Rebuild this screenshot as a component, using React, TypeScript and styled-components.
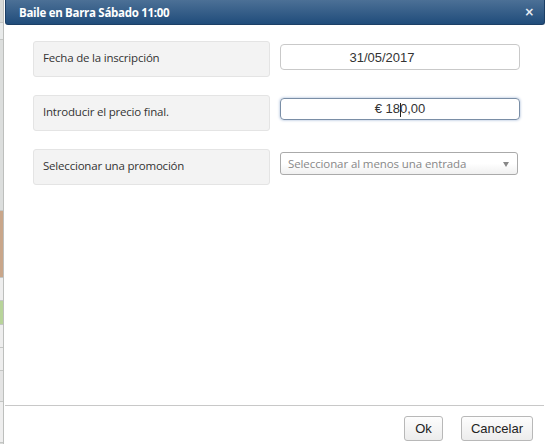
import React from "react";
import styled, { createGlobalStyle } from "styled-components";

const Global = createGlobalStyle`
  html, body {
    margin: 0;
    padding: 0;
    background: #fff;
    overflow: hidden;
  }
`;

const Page = styled.div`
  display: flex;
  width: 548px;
  height: 444px;
`;

const Strip = styled.div`
  width: 3px;
  display: flex;
  flex-direction: column;
  background: #d9dbd9;
`;

const StripPart = styled.div<{ $h: number; $c: string }>`
  height: ${(p) => p.$h}px;
  background: ${(p) => p.$c};
  border-bottom: 1px solid #c4c6c4;
`;

const Dialog = styled.div`
  flex: 1;
  display: flex;
  flex-direction: column;
  border-left: 1px solid #bdbfbd;
  background: #fff;
`;

const Header = styled.div`
  height: 25px;
  margin: 0 3px 0 1px;
  padding: 0 10px 0 13px;
  display: flex;
  align-items: center;
  justify-content: space-between;
  background: linear-gradient(#4c7096, #204c7b);
  border: 1px solid #1c3f66;
  border-top: none;
  border-radius: 0 0 3px 3px;
  box-sizing: border-box;
  color: #fff;
  font-family: "Open Sans", "DejaVu Sans", sans-serif;
  font-weight: 700;
  font-size: 11.5px;
  letter-spacing: -0.3px;
`;

const Close = styled.span`
  font-family: "DejaVu Sans", sans-serif;
  font-size: 12px;
  font-weight: 700;
  line-height: 1;
  color: #e8edf3;
`;

const Body = styled.div`
  flex: 1;
  display: flex;
  flex-direction: column;
  gap: 18px;
  padding: 16px 0 0 29px;
`;

const Row = styled.div`
  display: flex;
  align-items: flex-start;
`;

const Label = styled.div`
  width: 237px;
  height: 36px;
  box-sizing: border-box;
  padding: 0 9px 3px;
  display: flex;
  align-items: center;
  background: #f3f3f3;
  border: 1px solid #e4e4e4;
  border-radius: 3px;
  font-family: "Open Sans", "DejaVu Sans", sans-serif;
  font-size: 11.5px;
  color: #333;
  letter-spacing: -0.2px;
`;

const Field = styled.div<{ $focus?: boolean; $shift?: number }>`
  margin: 3px 0 0 10px;
  width: 240px;
  height: ${(p) => (p.$focus ? 22 : 26)}px;
  box-sizing: border-box;
  padding-right: ${(p) => p.$shift ?? 0}px;
  display: flex;
  align-items: center;
  justify-content: center;
  border: 1px solid ${(p) => (p.$focus ? "#7a8ea6" : "#c9c9c9")};
  border-radius: 4px;
  box-shadow: ${(p) => (p.$focus ? "0 0 3px #9db4d3" : "none")};
  font-family: "Liberation Sans", Arial, sans-serif;
  font-size: 13px;
  color: #333;
`;

const Caret = styled.span`
  display: inline-block;
  width: 1px;
  height: 14px;
  background: #222;
  vertical-align: middle;
  margin: 0 -1px 0 0;
`;

const Select = styled.div`
  margin: 3px 0 0 10px;
  width: 238px;
  height: 23px;
  box-sizing: border-box;
  padding: 0 8px 0 7px;
  display: flex;
  align-items: center;
  justify-content: space-between;
  border: 1px solid #aaa;
  border-radius: 3px;
  background: linear-gradient(#fff 50%, #f0f0f0);
  font-family: "Open Sans", "DejaVu Sans", sans-serif;
  font-size: 11.5px;
  color: #888;
  letter-spacing: -0.1px;
`;

const Arrow = styled.span`
  width: 0;
  height: 0;
  border-left: 3px solid transparent;
  border-right: 3px solid transparent;
  border-top: 5px solid #888;
  margin-top: 2px;
`;

const Footer = styled.div`
  margin: 0 4px 0 1px;
  border-top: 1px solid #c8c8c8;
  height: 39px;
  box-sizing: border-box;
  display: flex;
  justify-content: flex-end;
  align-items: flex-start;
  gap: 18px;
  padding: 10px 11px 0 0;
`;

const Button = styled.button<{ $w: number }>`
  width: ${(p) => p.$w}px;
  height: 25px;
  padding: 0;
  border: 1px solid #b8b8b8;
  border-radius: 3px;
  background: linear-gradient(#fdfdfd, #ececec);
  font-family: "Liberation Sans", Arial, sans-serif;
  font-size: 13px;
  color: #222;
`;

export default function App() {
  return (
    <Page>
      <Global />
      <Strip>
        <StripPart $h={22} $c="#d9dbd9" />
        <StripPart $h={16} $c="#e8eaea" />
        <StripPart $h={170} $c="#dcdedd" />
        <StripPart $h={66} $c="#c9a68a" />
        <StripPart $h={22} $c="#eeeeee" />
        <StripPart $h={23} $c="#b8d49a" />
        <StripPart $h={22} $c="#eeeeee" />
        <StripPart $h={22} $c="#eeeeee" />
        <StripPart $h={30} $c="#e4e4e4" />
        <StripPart $h={40} $c="#eeeeee" />
      </Strip>
      <Dialog>
        <Header>
          <span>Baile en Barra Sábado 11:00</span>
          <Close>×</Close>
        </Header>
        <Body>
          <Row>
            <Label>Fecha de la inscripción</Label>
            <Field $shift={36}>31/05/2017</Field>
          </Row>
          <Row>
            <Label>Introducir el precio final.</Label>
            <Field $focus>
              <span>
                € 18<Caret />0,00
              </span>
            </Field>
          </Row>
          <Row>
            <Label>Seleccionar una promoción</Label>
            <Select>
              <span>Seleccionar al menos una entrada</span>
              <Arrow />
            </Select>
          </Row>
        </Body>
        <Footer>
          <Button $w={39}>Ok</Button>
          <Button $w={72}>Cancelar</Button>
        </Footer>
      </Dialog>
    </Page>
  );
}
